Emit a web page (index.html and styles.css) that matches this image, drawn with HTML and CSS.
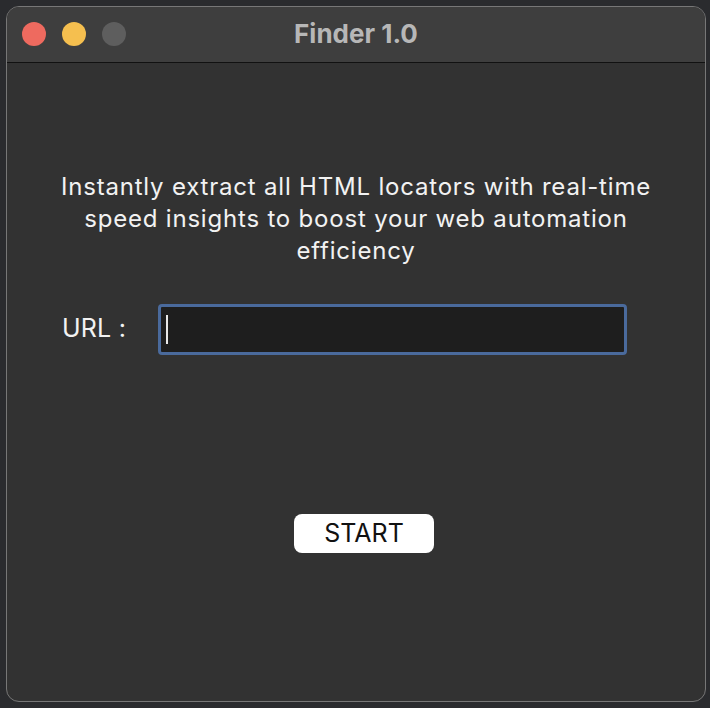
FILE: index.html
```html
<!DOCTYPE html>
<html>
<head>
<meta charset="utf-8">
<link rel="stylesheet" href="styles.css">
<title>Finder 1.0</title>
</head>
<body>
<div class="desk">
  <div class="window">
    <div class="titlebar">
      <div class="lights">
        <span class="light red"></span>
        <span class="light yellow"></span>
        <span class="light gray"></span>
      </div>
      <div class="title">Finder 1.0</div>
    </div>
    <div class="content">
      <p class="desc">Instantly extract all HTML locators with real-time<br>speed insights to boost your web automation<br>efficiency</p>
      <div class="url-row">
        <label class="url-label">URL :</label>
        <div class="url-input"><span class="caret"></span></div>
      </div>
      <div class="btn-row">
        <button class="start">START</button>
      </div>
    </div>
  </div>
</div>
</body>
</html>
```

FILE: styles.css
```css
html, body {
  margin: 0;
  padding: 0;
}
body {
  background: #2a2b2e;
  width: 710px;
  height: 708px;
  overflow: hidden;
  font-family: Inter, "Liberation Sans", sans-serif;
}
.desk {
  padding: 6px 4px 0 6px;
}
.window {
  width: 698px;
  height: 694px;
  border: 1px solid #777;
  border-radius: 13px;
  background: #323232;
  overflow: hidden;
  display: flex;
  flex-direction: column;
}
.titlebar {
  height: 55px;
  background: #3e3e3e;
  border-bottom: 1px solid #111;
  display: flex;
  align-items: center;
  position: relative;
}
.lights {
  display: flex;
  gap: 16px;
  padding-left: 15px;
  padding-bottom: 1px;
}
.light {
  width: 24px;
  height: 24px;
  border-radius: 50%;
  display: block;
}
.red { background: #ee6a5f; }
.yellow { background: #f5bf4f; }
.gray { background: #5e5e5e; }
.title {
  position: absolute;
  left: 0;
  right: 0;
  top: 0;
  bottom: 3px;
  display: flex;
  align-items: center;
  justify-content: center;
  color: #b7b7b7;
  font-weight: 700;
  font-size: 26px;
}
.content {
  flex: 1;
  padding-top: 108px;
}
.desc {
  margin: 0;
  text-align: center;
  color: #f2f2f2;
  font-size: 24px;
  letter-spacing: 0.8px;
  line-height: 32px;
}
.url-row {
  display: flex;
  align-items: center;
  margin-top: 37px;
  padding-left: 55px;
}
.url-label {
  width: 96px;
  color: #f2f2f2;
  font-size: 25px;
  letter-spacing: 0.2px;
  padding-bottom: 4px;
}
.url-input {
  width: 458px;
  height: 45px;
  border: 3px solid #4a6a9c;
  border-radius: 4px;
  background: #1e1e1e;
  display: flex;
  align-items: center;
  padding-left: 5px;
  box-sizing: content-box;
}
.caret {
  display: block;
  width: 2px;
  height: 29px;
  background: #e8e8e8;
}
.btn-row {
  margin-top: 159px;
  padding-left: 287px;
}
.start {
  width: 140px;
  height: 39px;
  border: none;
  border-radius: 8px;
  background: #ffffff;
  color: #111;
  font-family: Inter, "Liberation Sans", sans-serif;
  font-size: 25px;
  padding: 0 0 2px 0;
}
```
